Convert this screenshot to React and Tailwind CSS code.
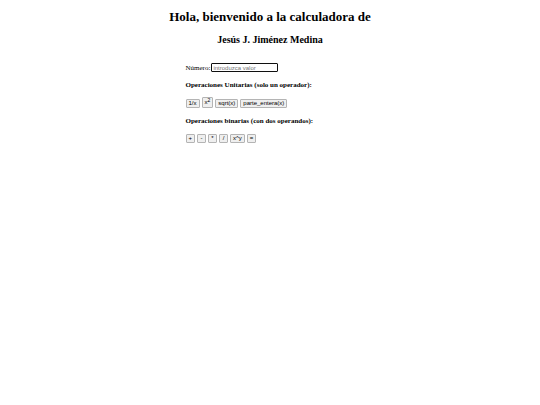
import { useState } from 'react';

const unaryOps = [
  { id: 'inverse', label: '1/x', run: (x) => 1 / x },
  { id: 'square', label: <>x<sup className="-top-[2px] text-[5px]">2</sup></>, run: (x) => x * x, tall: true },
  { id: 'sqrt', label: 'sqrt(x)', run: Math.sqrt },
  { id: 'trunc', label: 'parte_entera(x)', run: Math.trunc },
];

const binaryOps = {
  '+': (a, b) => a + b,
  '-': (a, b) => a - b,
  '*': (a, b) => a * b,
  '/': (a, b) => a / b,
  'x^y': (a, b) => a ** b,
};

const OpButton = ({ children, onClick, tall }) => (
  <button
    type="button"
    onClick={onClick}
    className={`${tall ? 'h-[11px]' : 'h-[9px]'} min-w-[9px] rounded-[1px] border border-[#b4b4b4] bg-[#efefef] px-[2px] font-['Liberation_Sans',sans-serif] text-[6px] leading-[7px] text-black`}
  >
    {children}
  </button>
);

const App = () => {
  const [value, setValue] = useState('');
  const [pending, setPending] = useState(null);

  const handleBinary = (op) => {
    setPending({ op, left: Number(value) });
    setValue('');
  };

  const handleEquals = () => {
    if (!pending) return;
    setValue(String(binaryOps[pending.op](pending.left, Number(value))));
    setPending(null);
  };

  return (
    <div className="bg-white font-['Liberation_Serif',serif] text-[7px] leading-2 text-black">
      <header className="flex flex-col gap-[7px] pt-[9px] text-center font-bold">
        <h1 className="text-[13px] leading-4">Hola, bienvenido a la calculadora de</h1>
        <h2 className="text-[10px] leading-4">Jesús J. Jiménez Medina</h2>
      </header>

      <main className="mx-auto max-w-[169px] pt-[15px]">
        <div className="flex items-center gap-px">
          <label htmlFor="numero">Número:</label>
          <input
            id="numero"
            type="text"
            autoFocus
            value={value}
            onChange={(e) => setValue(e.target.value)}
            placeholder="introduzca valor"
            className="h-[9px] w-[67px] rounded-[1px] border border-[#101010] px-px font-['Liberation_Sans',sans-serif] text-[6px] outline-none placeholder:text-[#757575]"
          />
        </div>

        <h3 className="mt-[9px] font-bold">Operaciones Unitarias (solo un operador):</h3>
        <div className="mt-2 flex items-end gap-[2px]">
          {unaryOps.map((op) => (
            <OpButton key={op.id} tall={op.tall} onClick={() => setValue(String(op.run(Number(value))))}>
              {op.label}
            </OpButton>
          ))}
        </div>

        <h3 className="mt-[9px] font-bold">Operaciones binarias (con dos operandos):</h3>
        <div className="mt-[9px] flex items-end gap-[2px]">
          {Object.keys(binaryOps).map((op) => (
            <OpButton key={op} onClick={() => handleBinary(op)}>{op}</OpButton>
          ))}
          <OpButton onClick={handleEquals}>=</OpButton>
        </div>
      </main>
    </div>
  );
};

export default App;
